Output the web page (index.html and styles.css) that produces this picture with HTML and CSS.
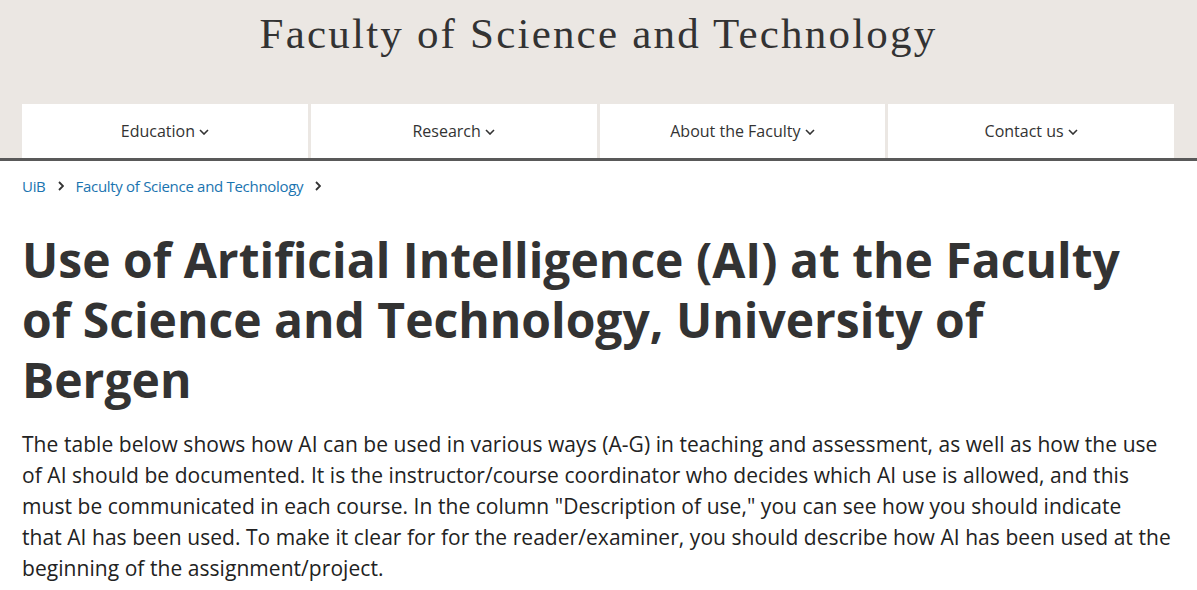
FILE: index.html
```html
<!DOCTYPE html>
<html lang="en">
<head>
<meta charset="utf-8">
<title>Use of Artificial Intelligence (AI) at the Faculty of Science and Technology</title>
<link rel="stylesheet" href="styles.css">
</head>
<body>
<header class="site-header">
  <div class="site-title">Faculty of Science and Technology</div>
  <nav class="main-nav">
    <a class="nav-item" href="#">Education<svg class="chev" viewBox="0 0 10 6" width="10" height="6"><path d="M1 1l4 4 4-4" fill="none" stroke="#333" stroke-width="1.6"/></svg></a>
    <a class="nav-item" href="#">Research<svg class="chev" viewBox="0 0 10 6" width="10" height="6"><path d="M1 1l4 4 4-4" fill="none" stroke="#333" stroke-width="1.6"/></svg></a>
    <a class="nav-item" href="#">About the Faculty<svg class="chev" viewBox="0 0 10 6" width="10" height="6"><path d="M1 1l4 4 4-4" fill="none" stroke="#333" stroke-width="1.6"/></svg></a>
    <a class="nav-item" href="#">Contact us<svg class="chev" viewBox="0 0 10 6" width="10" height="6"><path d="M1 1l4 4 4-4" fill="none" stroke="#333" stroke-width="1.6"/></svg></a>
  </nav>
</header>
<main class="content">
  <ol class="breadcrumb">
    <li><a href="#">UiB</a><svg class="bc-sep" viewBox="0 0 6 10" width="6" height="10"><path d="M1 1l4 4-4 4" fill="none" stroke="#333" stroke-width="1.8"/></svg></li>
    <li><a href="#">Faculty of Science and Technology</a><svg class="bc-sep" viewBox="0 0 6 10" width="6" height="10"><path d="M1 1l4 4-4 4" fill="none" stroke="#333" stroke-width="1.8"/></svg></li>
  </ol>
  <h1 class="page-title">Use of Artificial Intelligence (AI) at the Faculty of Science and Technology, University of Bergen</h1>
  <p class="lead">The table below shows how AI can be used in various ways (A-G) in teaching and assessment, as well as how the use of AI should be documented. It is the instructor/course coordinator who decides which AI use is allowed, and this must be communicated in each course. In the column "Description of use," you can see how you should indicate<br>that AI has been used. To make it clear for for the reader/examiner, you should describe how AI has been used at the beginning of the assignment/project.</p>
</main>
</body>
</html>
```

FILE: styles.css
```css
html, body {
  margin: 0;
  padding: 0;
  background: #fff;
}
body {
  font-family: "Open Sans", "Noto Sans", sans-serif;
  color: #333;
}
.site-header {
  background: #ebe7e3;
  border-bottom: 3px solid #595959;
}
.site-title {
  font-family: "Liberation Serif", "DejaVu Serif", serif;
  font-size: 43px;
  letter-spacing: 2.2px;
  color: #333;
  text-align: center;
  line-height: 1;
  padding-top: 12px;
  height: 90px;
  box-sizing: border-box;
}
.main-nav {
  display: flex;
  gap: 3px;
  padding: 14px 23px 0 22px;
}
.nav-item {
  flex: 1;
  background: #fff;
  height: 54px;
  display: flex;
  align-items: center;
  justify-content: center;
  gap: 4px;
  font-size: 16px;
  color: #333;
  text-decoration: none;
}
.chev {
  margin-top: 1px;
}
.content {
  padding: 0 22px;
}
.breadcrumb {
  list-style: none;
  margin: 0;
  padding: 16px 0 0;
  display: flex;
  gap: 12px;
  font-size: 15px;
  line-height: 18px;
  letter-spacing: -0.3px;
}
.breadcrumb li {
  display: flex;
  align-items: center;
  gap: 12px;
}
.breadcrumb a {
  color: #1a74b0;
  text-decoration: none;
}
.page-title {
  margin: 35px 0 0;
  max-width: 1110px;
  font-size: 48px;
  line-height: 60px;
  font-weight: 700;
  color: #333;
  letter-spacing: 0;
}
.lead {
  margin: 19px 0 0;
  font-size: 21px;
  line-height: 31px;
  color: #222;
  letter-spacing: 0.05px;
}
```
